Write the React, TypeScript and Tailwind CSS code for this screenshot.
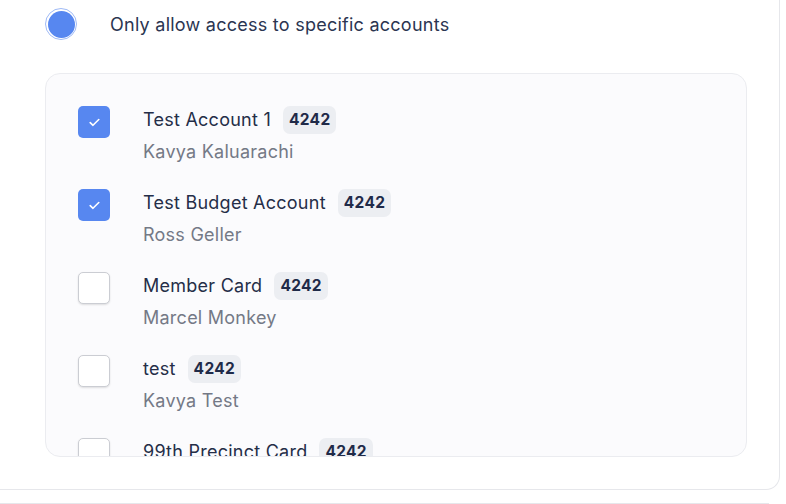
import React from "react";

const rows = [
  { name: "Test Account 1", owner: "Kavya Kaluarachi", checked: true },
  { name: "Test Budget Account", owner: "Ross Geller", checked: true },
  { name: "Member Card", owner: "Marcel Monkey", checked: false },
  { name: "test", owner: "Kavya Test", checked: false },
  { name: "99th Precinct Card", owner: "Jake Peralta", checked: false },
];

function Check({ checked }: { checked: boolean }) {
  if (checked) {
    return (
      <div className="w-8 h-8 shrink-0 rounded-[5px] bg-[#5787f0] flex items-center justify-center">
        <svg width="11" height="9" viewBox="0 0 11 9" fill="none">
          <path d="M1.2 4.6 L4 7.3 L9.8 1.5" stroke="white" strokeWidth="1.6" strokeLinecap="round" strokeLinejoin="round" />
        </svg>
      </div>
    );
  }
  return (
    <div className="w-8 h-8 shrink-0 rounded-[5px] bg-white border-[1.5px] border-[#cbcdd3] shadow-[0_1px_2px_rgba(0,0,0,0.12)]" />
  );
}

export default function App() {
  return (
    <div className="w-[786px] h-[504px] overflow-hidden bg-white" style={{ fontFamily: "Inter, 'Noto Sans', sans-serif" }}>
      <div className="w-[780px] h-[490px] border-r border-b border-[#e6e7eb] rounded-br-[14px] flex flex-col pl-[45px] pt-[8px]">
        <div className="flex items-center h-8">
          <div className="w-8 h-8 rounded-full border border-[#9fbaf6] p-[1.5px] shrink-0">
            <div className="w-full h-full rounded-full bg-[#5787f0]" />
          </div>
          <span className="ml-[33px] text-[18px] text-[#2b3551] tracking-[0.25px]">Only allow access to specific accounts</span>
        </div>
        <div className="mt-[33px] w-[702px] h-[384px] rounded-[15px] border border-[#ebecf0] bg-[#fbfbfd] overflow-hidden">
          <div className="pl-[32px] pt-[32px] flex flex-col gap-[26px]">
            {rows.map((r) => (
              <div key={r.name} className="flex">
                <Check checked={r.checked} />
                <div className="ml-[33px] flex flex-col">
                  <div className="flex items-center h-7">
                    <span className="text-[18px] leading-[26px] pb-px text-[#252e48] tracking-[0.25px]">{r.name}</span>
                    <span className="ml-[12px] h-7 px-[6px] rounded-[7px] bg-[#eceef2] text-[15.5px] font-bold text-[#1f2a48] flex items-center tracking-[0.3px]">4242</span>
                  </div>
                  <div className="mt-[5px] h-6 flex items-center text-[18px] text-[#747986] tracking-[0.25px]">{r.owner}</div>
                </div>
              </div>
            ))}
          </div>
        </div>
      </div>
      <div className="mt-[13px] w-[769px] border-t border-[#e6e7eb]" />
    </div>
  );
}
